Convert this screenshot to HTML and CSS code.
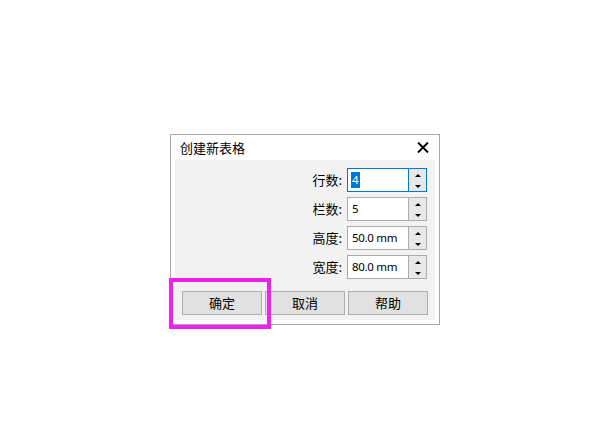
FILE: index.html
```html
<!DOCTYPE html>
<html lang="zh-CN">
<head>
<meta charset="utf-8">
<title>创建新表格</title>
<link rel="stylesheet" href="styles.css">
</head>
<body>
<div class="page">
  <div class="dialog">
    <div class="titlebar">
      <span class="title">创建新表格</span>
      <svg class="close" width="12" height="11" viewBox="0 0 12 11"><path d="M1 0.5 L11 10.5 M11 0.5 L1 10.5" stroke="#000" stroke-width="1.9" fill="none"/></svg>
    </div>
    <div class="panel">
      <div class="fields">
        <div class="row">
          <span class="label">行数:</span>
          <div class="spin focused">
            <div class="field"><span class="sel">4</span></div>
            <div class="arrows"><span class="up"></span><span class="down"></span></div>
          </div>
        </div>
        <div class="row">
          <span class="label">栏数:</span>
          <div class="spin">
            <div class="field">5</div>
            <div class="arrows"><span class="up"></span><span class="down"></span></div>
          </div>
        </div>
        <div class="row">
          <span class="label">高度:</span>
          <div class="spin">
            <div class="field">50.0 mm</div>
            <div class="arrows"><span class="up"></span><span class="down"></span></div>
          </div>
        </div>
        <div class="row">
          <span class="label">宽度:</span>
          <div class="spin">
            <div class="field">80.0 mm</div>
            <div class="arrows"><span class="up"></span><span class="down"></span></div>
          </div>
        </div>
      </div>
      <div class="buttons">
        <button class="btn">确定</button>
        <button class="btn">取消</button>
        <button class="btn">帮助</button>
      </div>
    </div>
  </div>
</div>
<div class="marker"></div>
</body>
</html>
```

FILE: styles.css
```css
* { box-sizing: border-box; }
html, body { margin: 0; padding: 0; }
body {
  width: 599px;
  height: 424px;
  background: #ffffff;
  font-family: "Noto Sans", "Noto Sans CJK SC", sans-serif;
  font-size: 13px;
  color: #000;
  position: relative;
  overflow: hidden;
}
.page { padding: 134px 0 0 170px; }
.dialog {
  width: 270px;
  height: 191px;
  border: 1px solid #a8a8a8;
  background: #fff;
  display: flex;
  flex-direction: column;
}
.titlebar {
  height: 25px;
  display: flex;
  align-items: center;
  justify-content: space-between;
  padding: 0 10px 0 9px;
}
.title {
  font-family: "Noto Sans CJK SC", sans-serif;
  font-size: 13px;
  line-height: 25px;
}
.close { display: block; margin-top: -1px; }
.panel {
  margin: 0 4px 4px;
  height: 160px;
  background: #f2f2f2;
  padding: 8px 7px 5px;
  display: flex;
  flex-direction: column;
  justify-content: space-between;
}
.fields {
  display: flex;
  flex-direction: column;
  gap: 5px;
  padding-right: 1px;
}
.row {
  display: flex;
  justify-content: flex-end;
  align-items: center;
  height: 24px;
  gap: 5px;
}
.label {
  font-family: "Noto Sans CJK SC", sans-serif;
  font-size: 13px;
  line-height: 24px;
}
.spin {
  width: 80px;
  height: 24px;
  border: 1px solid #ababab;
  background: #fff;
  display: flex;
}
.spin.focused { border-color: #0078d7; }
.spin.focused .field { border-right-color: #0078d7; }
.field {
  width: 61px;
  border-right: 1px solid #ababab;
  padding-left: 4px;
  font-size: 11.5px;
  letter-spacing: -0.3px;
  line-height: 22px;
  white-space: nowrap;
}
.sel {
  background: #0078d7;
  color: #fff;
  display: inline-block;
  line-height: 16px;
  padding: 0 1px;
  margin-left: -1px;
  letter-spacing: 0;
}
.arrows {
  flex: 1;
  background: #e8e8e8;
  display: flex;
  flex-direction: column;
  align-items: center;
  justify-content: space-between;
  padding: 5px 0 3px;
}
.up, .down {
  width: 0;
  height: 0;
  border-left: 3px solid transparent;
  border-right: 3px solid transparent;
}
.up { border-bottom: 3px solid #000; }
.down { border-top: 3px solid #000; }
.buttons {
  display: flex;
  gap: 3px;
}
.btn {
  width: 80px;
  height: 24px;
  border: 1px solid #adadad;
  background: #e1e1e1;
  font-family: "Noto Sans CJK SC", sans-serif;
  font-size: 13px;
  line-height: 22px;
  padding: 0;
  color: #000;
  margin: 0;
}
.marker {
  position: absolute;
  left: 169px;
  top: 278px;
  width: 102px;
  height: 51px;
  border: 4px solid #f020f0;
}
```
